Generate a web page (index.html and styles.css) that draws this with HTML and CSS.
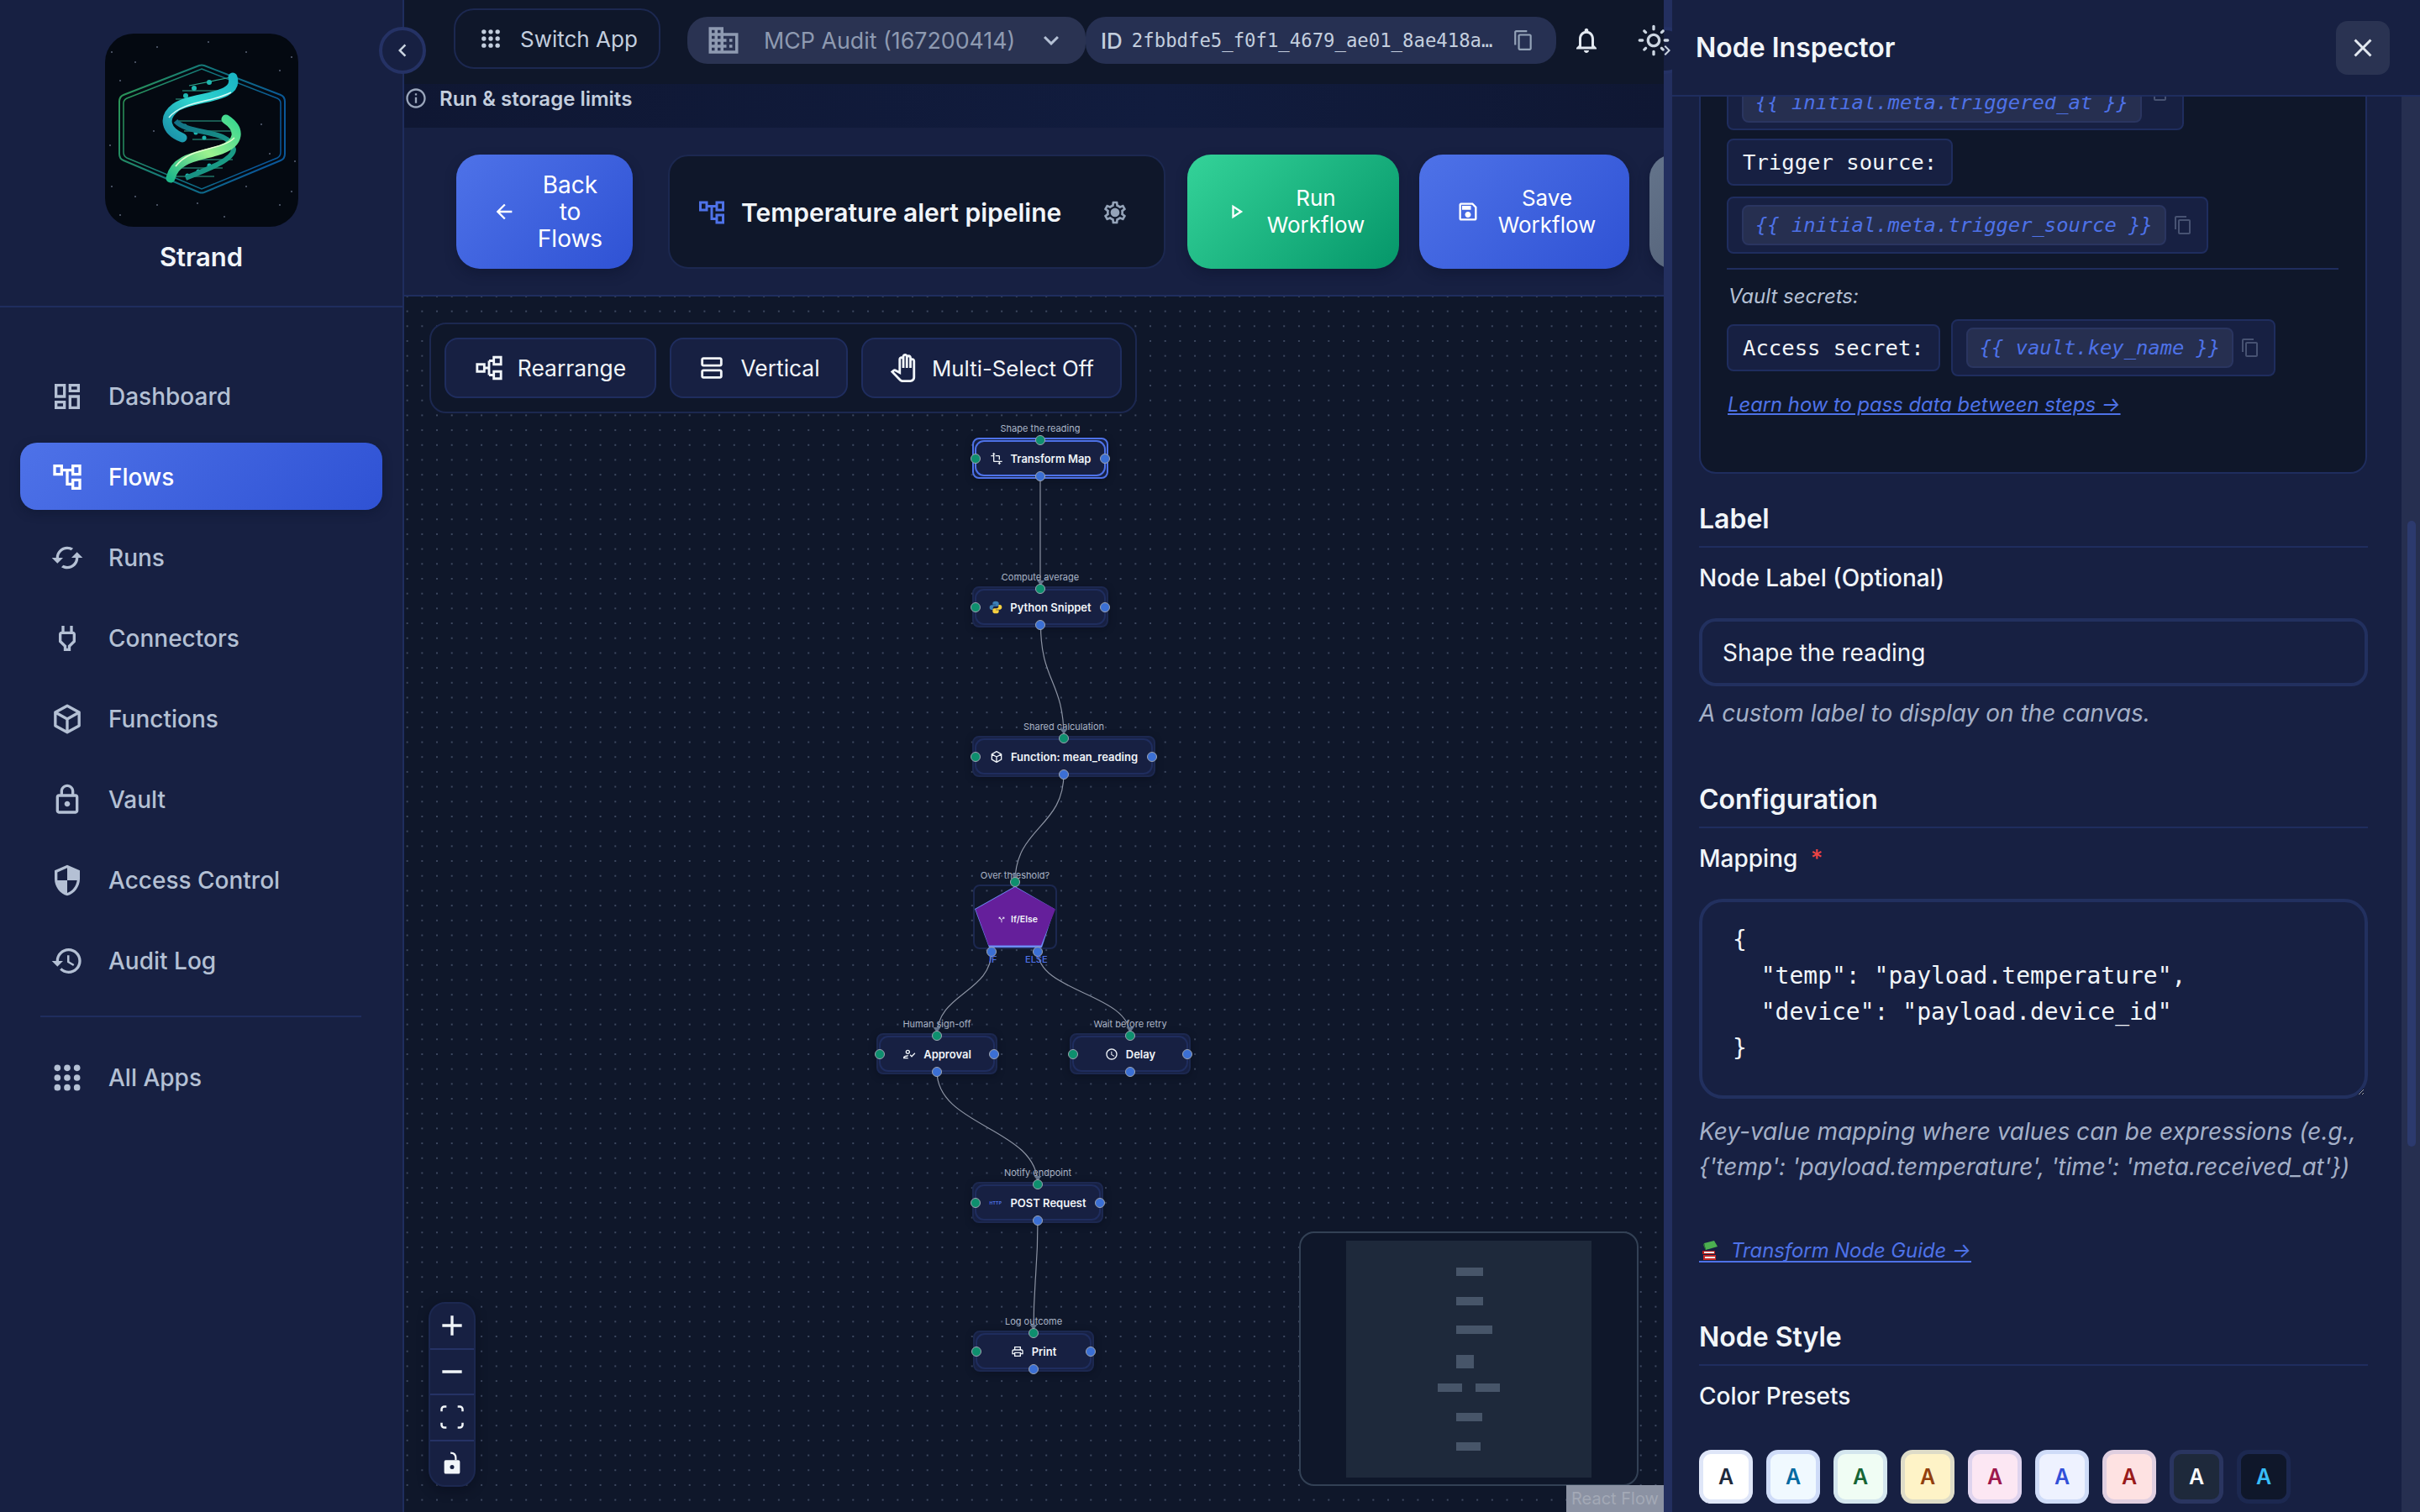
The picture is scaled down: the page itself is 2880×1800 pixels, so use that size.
FILE: index.html
```html
<!DOCTYPE html>
<html lang="en">
<head>
    <meta charset="utf-8">
    <title>Temperature alert pipeline</title>
    <link rel="stylesheet" href="styles.css">
</head>
<body>
    <svg class="sprite" width="0" height="0">
        <symbol id="i-apps" viewBox="0 0 24 24"><circle cx="5" cy="5" r="2.3"/><circle cx="12" cy="5" r="2.3"/><circle cx="19" cy="5" r="2.3"/><circle cx="5" cy="12" r="2.3"/><circle cx="12" cy="12" r="2.3"/><circle cx="19" cy="12" r="2.3"/><circle cx="5" cy="19" r="2.3"/><circle cx="12" cy="19" r="2.3"/><circle cx="19" cy="19" r="2.3"/></symbol>
        <symbol id="i-tree" viewBox="0 0 24 24"><path d="M22 11V3h-7v3H9V3H2v8h7V8h2v10h4v3h7v-8h-7v3h-2V8h2v3zM7 9H4V5h3zm10 6h3v4h-3zm0-10h3v4h-3z"/></symbol>
        <symbol id="i-cube" viewBox="0 0 24 24"><path d="M12 2.500 20.500 7.200v9.600L12 21.500l-8.500-4.700V7.200zM3.500 7.200 12 12l8.500-4.800M12 12v9.500" fill="none" stroke="currentColor" stroke-width="2" stroke-linejoin="round"/></symbol>
        <symbol id="i-copy" viewBox="0 0 24 24"><path d="M16 1H4c-1.100 0-2 .9-2 2v14h2V3h12zm3 4H8c-1.100 0-2 .9-2 2v14c0 1.100.9 2 2 2h11c1.100 0 2-.9 2-2V7c0-1.100-.9-2-2-2m0 16H8V7h11z"/></symbol>
    </svg>

    <div class="app">
        <aside class="sidebar">
            <div class="brand">
                <svg class="logo" viewBox="0 0 230 230">
                    <defs>
                        <linearGradient id="hexStroke" x1="0" y1="0" x2="1" y2="0.3">
                            <stop offset="0" stop-color="#2f9a52"/>
                            <stop offset="0.55" stop-color="#11747f"/>
                            <stop offset="1" stop-color="#0a5798"/>
                        </linearGradient>
                        <linearGradient id="ribbonTop" x1="0" y1="1" x2="1" y2="0">
                            <stop offset="0" stop-color="#1a8fa8"/>
                            <stop offset="0.5" stop-color="#2fd6cf"/>
                            <stop offset="1" stop-color="#1bb6c4"/>
                        </linearGradient>
                        <linearGradient id="ribbonBottom" x1="0" y1="1" x2="1" y2="0">
                            <stop offset="0" stop-color="#1fb98a"/>
                            <stop offset="0.5" stop-color="#9cf28f"/>
                            <stop offset="1" stop-color="#39d68f"/>
                        </linearGradient>
                        <linearGradient id="ribbonBack" x1="0" y1="0" x2="1" y2="1">
                            <stop offset="0" stop-color="#126f86"/>
                            <stop offset="1" stop-color="#1ca884"/>
                        </linearGradient>
                    </defs>
                    <rect width="230" height="230" rx="34" fill="#040911"/>
                    <g fill="#5b6478">
                        <circle cx="8" cy="22" r="1"/><circle cx="36" cy="34" r="1"/><circle cx="62" cy="16" r="1"/><circle cx="123" cy="10" r="1"/><circle cx="168" cy="22" r="1"/><circle cx="222" cy="28" r="1"/><circle cx="208" cy="44" r="1"/><circle cx="18" cy="56" r="1"/><circle cx="6" cy="133" r="1"/><circle cx="58" cy="116" r="1"/><circle cx="186" cy="108" r="1"/><circle cx="196" cy="143" r="1"/><circle cx="8" cy="182" r="1"/><circle cx="36" cy="194" r="1"/><circle cx="62" cy="204" r="1"/><circle cx="110" cy="202" r="1"/><circle cx="168" cy="182" r="1"/><circle cx="222" cy="188" r="1"/><circle cx="208" cy="204" r="1"/><circle cx="142" cy="218" r="1"/><circle cx="18" cy="216" r="1"/><circle cx="226" cy="152" r="1"/>
                    </g>
                    <path d="M112 38q3-1 6 0l91 35q5 2 5 8v62q0 6-5 8l-91 38q-3 1-6 0l-90-38q-5-2-5-8V81q0-6 5-8z" fill="none" stroke="url(#hexStroke)" stroke-width="2"/>
                    <path d="M115 42 205 77q4 2 4 6v58q0 5-4 7L115 185 26 148q-4-2-4-7V83q0-4 4-6z" fill="none" stroke="url(#hexStroke)" stroke-width="1.500"/>
                    <g stroke="#2ea98f" stroke-width="1.200">
                        <path d="M100 62l50-10M92 68h52M84 78h40M88 104h60M94 116h56M104 126h48M96 150h56M88 160h52M84 170h46"/>
                    </g>
                    <g fill="#1eb7b0">
                        <circle cx="124" cy="58" r="3"/><circle cx="106" cy="65" r="3"/><circle cx="96" cy="74" r="3"/><circle cx="95" cy="110" r="2.500"/><circle cx="108" cy="118" r="2.500"/><circle cx="118" cy="124" r="2.500"/><circle cx="124" cy="157" r="2.500"/><circle cx="111" cy="164" r="2.500"/><circle cx="98" cy="169" r="2.500"/>
                    </g>
                    <path d="M84 104C100 122 148 112 153 138 152 150 126 160 96 172" fill="none" stroke="url(#ribbonBack)" stroke-width="6"/>
                    <path d="M152 52C160 78 104 74 84 88 68 100 72 116 92 124" fill="none" stroke="url(#ribbonTop)" stroke-width="11" stroke-linecap="round"/>
                    <path d="M144 102C162 114 160 130 138 138 116 146 84 146 78 172" fill="none" stroke="url(#ribbonBottom)" stroke-width="11" stroke-linecap="round"/>
                    <path d="M150 70C128 82 92 80 76 100" fill="none" stroke="#d6fbf5" stroke-width="1.500"/>
                    <path d="M154 124C138 140 102 134 84 158" fill="none" stroke="#e5ffd0" stroke-width="1.500"/>
                </svg>
                <div class="brand-name">Strand</div>
            </div>
            <nav class="nav">
                <a class="nav-item"><svg class="nav-icon" viewBox="0 0 24 24"><path d="M19 5v2h-4V5zM9 5v6H5V5zm10 8v6h-4v-6zM9 17v2H5v-2zM21 3h-8v6h8zM11 3H3v10h8zm10 8h-8v10h8zm-10 4H3v6h8z"/></svg>Dashboard</a>
                <a class="nav-item active"><svg class="nav-icon" viewBox="0 0 24 24"><use href="#i-tree"/></svg>Flows</a>
                <a class="nav-item"><svg class="nav-icon" viewBox="0 0 24 24"><path d="m19 8-4 4h3c0 3.310-2.690 6-6 6-1.010 0-1.970-.25-2.800-.7l-1.460 1.460C8.970 19.540 10.430 20 12 20c4.420 0 8-3.580 8-8h3zM6 12c0-3.310 2.690-6 6-6 1.010 0 1.970.25 2.800.7l1.460-1.460C15.030 4.460 13.570 4 12 4c-4.420 0-8 3.580-8 8H1l4 4 4-4z"/></svg>Runs</a>
                <a class="nav-item"><svg class="nav-icon" viewBox="0 0 24 24"><path d="M16 9v4.660l-3.500 3.510V19h-1v-1.830L8 13.650V9zm0-6h-2v4h-4V3H8v4h-.01C6.900 6.990 6 7.890 6 8.980V14.500L9.500 18v3h5v-3l3.500-3.510V9c0-1.100-.9-2-2-2z"/></svg>Connectors</a>
                <a class="nav-item"><svg class="nav-icon" viewBox="0 0 24 24"><use href="#i-cube"/></svg>Functions</a>
                <a class="nav-item"><svg class="nav-icon" viewBox="0 0 24 24"><path d="M18 8h-1V6c0-2.760-2.240-5-5-5S7 3.240 7 6v2H6c-1.100 0-2 .9-2 2v10c0 1.100.9 2 2 2h12c1.100 0 2-.9 2-2V10c0-1.100-.9-2-2-2M9 6c0-1.660 1.340-3 3-3s3 1.340 3 3v2H9zm9 14H6V10h12zm-6-3c1.100 0 2-.9 2-2s-.9-2-2-2-2 .9-2 2 .9 2 2 2"/></svg>Vault</a>
                <a class="nav-item"><svg class="nav-icon" viewBox="0 0 24 24"><path d="M12 1 3 5v6c0 5.550 3.840 10.740 9 12 5.160-1.260 9-6.450 9-12V5zm0 10.990h7c-.53 4.120-3.280 7.790-7 8.940V12H5V6.300l7-3.110z"/></svg>Access Control</a>
                <a class="nav-item"><svg class="nav-icon" viewBox="0 0 24 24"><path d="M13 3c-4.970 0-9 4.030-9 9H1l3.890 3.890.07.14L9 12H6c0-3.870 3.130-7 7-7s7 3.130 7 7-3.130 7-7 7c-1.930 0-3.680-.79-4.940-2.060l-1.420 1.420C8.270 19.990 10.510 21 13 21c4.970 0 9-4.030 9-9s-4.030-9-9-9m-1 5v5l4.280 2.540.72-1.210-3.500-2.080V8z"/></svg>Audit Log</a>
                <div class="nav-divider"></div>
                <a class="nav-item"><svg class="nav-icon" viewBox="0 0 24 24"><use href="#i-apps"/></svg>All Apps</a>
            </nav>
            <button class="collapse-btn"><svg viewBox="0 0 24 24"><path d="M15.410 7.410 14 6l-6 6 6 6 1.410-1.410L10.830 12z"/></svg></button>
        </aside>

        <main class="main">
            <header class="topbar">
                <button class="switch-app"><svg viewBox="0 0 24 24"><use href="#i-apps"/></svg>Switch App</button>
                <div class="org-select">
                    <svg class="org-icon" viewBox="0 0 24 24"><path d="M12 7V3H2v18h20V7zM6 19H4v-2h2zm0-4H4v-2h2zm0-4H4V9h2zm0-4H4V5h2zm4 12H8v-2h2zm0-4H8v-2h2zm0-4H8V9h2zm0-4H8V5h2zm10 12h-8v-2h2v-2h-2v-2h2v-2h-2V9h8zm-2-8h-2v2h2zm0 4h-2v2h2z"/></svg>
                    <span class="org-name">MCP Audit (167200414)</span>
                    <svg class="org-chevron" viewBox="0 0 24 24"><path d="M7.410 8.590 12 13.170l4.590-4.580L18 10l-6 6-6-6z"/></svg>
                </div>
                <div class="id-chip">
                    <span class="id-key">ID</span>
                    <span class="id-value">2fbbdfe5_f0f1_4679_ae01_8ae418a…</span>
                    <svg viewBox="0 0 24 24"><use href="#i-copy"/></svg>
                </div>
                <svg class="top-icon bell" viewBox="0 0 24 24"><path d="M12 22c1.100 0 2-.9 2-2h-4c0 1.100.9 2 2 2m6-6v-5c0-3.070-1.630-5.640-4.500-6.320V4c0-.83-.67-1.500-1.500-1.500s-1.500.67-1.500 1.500v.68C7.640 5.360 6 7.920 6 11v5l-2 2v1h16v-1zm-2 1H8v-6c0-2.480 1.510-4.500 4-4.500s4 2.020 4 4.500z"/></svg>
                <svg class="top-icon sun" viewBox="0 0 24 24"><path d="M12 9c1.650 0 3 1.350 3 3s-1.350 3-3 3-3-1.350-3-3 1.350-3 3-3m0-2c-2.760 0-5 2.240-5 5s2.240 5 5 5 5-2.240 5-5-2.240-5-5-5M2 13h2c.55 0 1-.45 1-1s-.45-1-1-1H2c-.55 0-1 .45-1 1s.45 1 1 1m18 0h2c.55 0 1-.45 1-1s-.45-1-1-1h-2c-.55 0-1 .45-1 1s.45 1 1 1M11 2v2c0 .55.45 1 1 1s1-.45 1-1V2c0-.55-.45-1-1-1s-1 .45-1 1m0 18v2c0 .55.45 1 1 1s1-.45 1-1v-2c0-.55-.45-1-1-1s-1 .45-1 1M5.990 4.580c-.39-.39-1.030-.39-1.410 0-.39.39-.39 1.030 0 1.410l1.060 1.060c.39.39 1.030.39 1.410 0s.39-1.030 0-1.410zm12.370 12.370c-.39-.39-1.030-.39-1.410 0-.39.39-.39 1.030 0 1.410l1.060 1.060c.39.39 1.030.39 1.410 0 .39-.39.39-1.030 0-1.410zm1.060-10.960c.39-.39.39-1.030 0-1.410-.39-.39-1.030-.39-1.410 0l-1.060 1.060c-.39.39-.39 1.030 0 1.410s1.030.39 1.410 0zM7.050 18.360c.39-.39.39-1.030 0-1.410-.39-.39-1.030-.39-1.410 0l-1.060 1.060c-.39.39-.39 1.030 0 1.410s1.030.39 1.410 0z"/></svg>
            </header>

            <div class="limits-bar">
                <svg viewBox="0 0 24 24"><path d="M11 7h2v2h-2zm0 4h2v6h-2zm1-9C6.480 2 2 6.480 2 12s4.480 10 10 10 10-4.480 10-10S17.520 2 12 2m0 18c-4.410 0-8-3.590-8-8s3.590-8 8-8 8 3.590 8 8-3.590 8-8 8"/></svg>
                Run &amp; storage limits
            </div>

            <div class="toolbar">
                <button class="action action-blue action-back">
                    <svg viewBox="0 0 24 24"><path d="M20 11H7.830l5.590-5.590L12 4l-8 8 8 8 1.410-1.410L7.830 13H20z"/></svg>
                    <span>Back<br>to<br>Flows</span>
                </button>
                <div class="flow-title">
                    <svg class="flow-title-icon" viewBox="0 0 24 24"><use href="#i-tree"/></svg>
                    <span class="flow-title-text">Temperature alert pipeline</span>
                    <svg class="flow-title-gear" viewBox="0 0 24 24"><path d="M19.430 12.980c.04-.32.07-.64.07-.98 0-.34-.03-.66-.07-.98l2.110-1.650c.19-.15.24-.42.12-.64l-2-3.460c-.09-.16-.26-.25-.44-.25-.06 0-.12.01-.17.03l-2.490 1c-.52-.4-1.080-.73-1.690-.98l-.38-2.650C14.460 2.180 14.250 2 14 2h-4c-.25 0-.46.18-.49.42l-.38 2.650c-.61.25-1.170.59-1.690.98l-2.490-1c-.06-.02-.12-.03-.18-.03-.17 0-.34.09-.43.25l-2 3.460c-.13.22-.07.49.12.64l2.110 1.650c-.04.32-.07.65-.07.98 0 .33.03.66.07.98l-2.110 1.650c-.19.15-.24.42-.12.64l2 3.460c.09.16.26.25.44.25.06 0 .12-.01.17-.03l2.490-1c.52.4 1.080.73 1.690.98l.38 2.650c.03.24.24.42.49.42h4c.25 0 .46-.18.49-.42l.38-2.650c.61-.25 1.170-.59 1.690-.98l2.490 1c.06.02.12.03.18.03.17 0 .34-.09.43-.25l2-3.460c.12-.22.07-.49-.12-.64zM17.450 11.280c.04.31.05.52.05.72s-.02.42-.05.72l-.14 1.130.89.7 1.080.84-.7 1.210-1.270-.51-1.040-.42-.9.68c-.43.32-.84.56-1.250.73l-1.060.43-.16 1.130-.2 1.350h-1.400l-.19-1.350-.16-1.130-1.060-.43c-.43-.18-.83-.41-1.230-.71l-.91-.7-1.060.43-1.270.51-.7-1.210 1.080-.84.89-.7-.14-1.130c-.03-.31-.05-.54-.05-.73s.02-.42.05-.72l.14-1.130-.89-.7-1.080-.84.7-1.210 1.270.51 1.040.42.9-.68c.43-.32.84-.56 1.250-.73l1.060-.43.16-1.130.2-1.350h1.390l.19 1.350.16 1.130 1.060.43c.43.18.83.41 1.230.71l.91.7 1.060-.43 1.270-.51.7 1.210-1.070.85-.89.7zM12 8c-2.210 0-4 1.790-4 4s1.790 4 4 4 4-1.790 4-4-1.790-4-4-4"/></svg>
                </div>
                <button class="action action-green action-run">
                    <svg viewBox="0 0 24 24"><path d="M10 8.640 15.270 12 10 15.360zM8 5v14l11-7z"/></svg>
                    <span>Run<br>Workflow</span>
                </button>
                <button class="action action-blue action-save">
                    <svg viewBox="0 0 24 24"><path d="M17 3H5c-1.110 0-2 .9-2 2v14c0 1.100.89 2 2 2h14c1.100 0 2-.9 2-2V7zm2 16H5V5h11.170L19 7.830zm-7-7c-1.660 0-3 1.340-3 3s1.340 3 3 3 3-1.340 3-3-1.340-3-3-3M6 6h9v4H6z"/></svg>
                    <span>Save<br>Workflow</span>
                </button>
                <button class="action action-gray"></button>
            </div>

            <section class="canvas">
                <div class="layout-bar">
                    <button class="layout-btn btn-rearrange"><svg viewBox="0 0 24 24" class="stroke-icon"><path d="M2 9h6v6H2zM16 3h6v6h-6zM16 15h6v6h-6zM8 12h4M12 6v12M12 6h4M12 18h4"/></svg>Rearrange</button>
                    <button class="layout-btn btn-vertical"><svg viewBox="0 0 24 24"><path d="M19 13H5c-1.100 0-2 .9-2 2v4c0 1.100.9 2 2 2h14c1.100 0 2-.9 2-2v-4c0-1.100-.9-2-2-2m0 6H5v-4h14zm0-16H5c-1.100 0-2 .9-2 2v4c0 1.100.9 2 2 2h14c1.100 0 2-.9 2-2V5c0-1.100-.9-2-2-2m0 6H5V5h14z"/></svg>Vertical</button>
                    <button class="layout-btn btn-multi"><svg viewBox="0 0 24 24"><path d="M18 24h-6.550c-1.080 0-2.140-.45-2.890-1.230l-7.300-7.610 2.070-1.830c.62-.55 1.530-.66 2.260-.27L8 14.340V4.790c0-1.380 1.120-2.500 2.500-2.500.17 0 .34.02.51.05.09-1.300 1.170-2.330 2.490-2.330.86 0 1.610.43 2.060 1.090.29-.12.61-.18.94-.18 1.380 0 2.500 1.120 2.500 2.500v.28c.16-.03.33-.05.5-.05 1.380 0 2.500 1.120 2.500 2.500V20c0 2.210-1.790 4-4 4M4.140 15.280l5.860 6.100c.38.39.9.62 1.440.62H18c1.100 0 2-.9 2-2V6.150c0-.28-.22-.5-.5-.5s-.5.22-.5.5V12h-2V3.420c0-.28-.22-.5-.5-.5s-.5.22-.5.5V12h-2V2.510c0-.28-.22-.5-.5-.5s-.5.22-.5.5V12h-2V4.790c0-.28-.22-.5-.5-.5s-.5.23-.5.5v12.870l-5.350-2.830z"/></svg>Multi-Select Off</button>
                </div>

                <svg class="edges" viewBox="481 353 1499 1447">
                    <g class="edge-lines">
                        <path d="M1238 567V701"/>
                        <path d="M1238.500 744C1238.500 811 1266 811 1266 878"/>
                        <path d="M1266 921C1266 985 1208 985 1208 1050"/>
                        <path d="M1180 1132C1180 1182 1115 1182 1115 1233"/>
                        <path d="M1235 1132C1235 1182 1345 1182 1345 1233"/>
                        <path d="M1115 1275C1115 1342 1235 1342 1235 1410"/>
                        <path d="M1235 1452C1235 1519 1230 1519 1230 1587"/>
                    </g>
                    <g class="edge-arrows">
                        <path d="M1234 691h9l-4.500 6z"/>
                        <path d="M1261.500 868h9l-4.500 6z"/>
                        <path d="M1203.500 1040h9l-4.500 6z"/>
                        <path d="M1110.500 1223h9l-4.500 6z"/>
                        <path d="M1340.500 1223h9l-4.500 6z"/>
                        <path d="M1230.500 1400h9l-4.500 6z"/>
                        <path d="M1225.500 1577h9l-4.500 6z"/>
                    </g>
                </svg>

                <div class="node node-transform selected">
                    <span class="node-label">Shape the reading</span>
                    <svg class="node-icon" viewBox="0 0 24 24"><path d="M22 18v-2H8V4h2L7 1 4 4h2v2H2v2h4v8c0 1.100.9 2 2 2h8v2h-2l3 3 3-3h-2v-2zM10 8h6v6h2V8c0-1.100-.9-2-2-2h-6z"/></svg>
                    Transform Map
                    <i class="handle h-top"></i><i class="handle h-left"></i><i class="handle h-right"></i><i class="handle h-bottom"></i>
                </div>
                <div class="node node-python">
                    <span class="node-label">Compute average</span>
                    <svg class="node-icon" viewBox="0 0 24 24"><path fill="#3b7fb8" d="M12 1C8 1 6.500 2.500 6.500 4.500V7H12v1H4.500C2.500 8 1 9.800 1 12.300s1.500 4.200 3.500 4.200H7v-3c0-2 1.500-3.300 3.300-3.300h4.400c1.600 0 2.800-1.200 2.800-2.800V4.500C17.500 2.500 15.500 1 12 1z"/><path fill="#f6d03f" d="M12 23c4 0 5.500-1.500 5.500-3.500V17H12v-1h7.500c2 0 3.500-1.800 3.500-4.300s-1.500-4.200-3.500-4.200H17v3c0 2-1.500 3.300-3.300 3.300H9.300c-1.600 0-2.800 1.200-2.800 2.800v2.900C6.500 21.500 8.500 23 12 23z"/></svg>
                    Python Snippet
                    <i class="handle h-top"></i><i class="handle h-left"></i><i class="handle h-right"></i><i class="handle h-bottom"></i>
                </div>
                <div class="node node-function">
                    <span class="node-label">Shared calculation</span>
                    <svg class="node-icon" viewBox="0 0 24 24"><use href="#i-cube"/></svg>
                    Function: mean_reading
                    <i class="handle h-top"></i><i class="handle h-left"></i><i class="handle h-right"></i><i class="handle h-bottom"></i>
                </div>
                <div class="node-if">
                    <span class="node-label">Over threshold?</span>
                    <svg class="pentagon" viewBox="0 0 100 77">
                        <path class="pentagon-edge" d="M50 2 97 29 82 75H19L2 29z"/>
                        <path class="pentagon-fill" d="M50 3 98 29.500 81 72.500H18.500L3 29.500z"/>
                    </svg>
                    <span class="if-title"><svg viewBox="0 0 24 24"><path d="m14 4 2.290 2.290-2.880 2.880 1.420 1.420 2.880-2.880L20 10V4zm-4 0H4v6l2.290-2.290 4.710 4.700V20h2v-8.410l-5.290-5.300z"/></svg>If/Else</span>
                    <i class="handle h-top"></i><i class="handle h-if"></i><i class="handle h-else"></i>
                    <span class="branch branch-if">IF</span><span class="branch branch-else">ELSE</span>
                </div>
                <div class="node node-approval">
                    <span class="node-label">Human sign-off</span>
                    <svg class="node-icon" viewBox="0 0 24 24"><path d="M9.500 12a4 4 0 1 0 0-8 4 4 0 0 0 0 8zm0-6a2 2 0 1 1 0 4 2 2 0 0 1 0-4zM3.500 18c.2-.7 3.300-2 6-2 .4-.7.8-1.300 1.300-1.900-.5-.1-.9-.1-1.300-.1-2.700 0-8 1.300-8 4v2h9.500l-1.900-2zM21.600 9.500 16.500 14.600 14.400 12.500 13 13.900 16.500 17.500 23 10.900z"/></svg>
                    Approval
                    <i class="handle h-top"></i><i class="handle h-left"></i><i class="handle h-right"></i><i class="handle h-bottom"></i>
                </div>
                <div class="node node-delay">
                    <span class="node-label">Wait before retry</span>
                    <svg class="node-icon" viewBox="0 0 24 24"><path d="M11.990 2C6.470 2 2 6.480 2 12s4.470 10 9.990 10C17.520 22 22 17.520 22 12S17.520 2 11.990 2M12 20c-4.420 0-8-3.580-8-8s3.580-8 8-8 8 3.580 8 8-3.580 8-8 8m.5-13H11v6l5.250 3.150.75-1.230-4.500-2.670z"/></svg>
                    Delay
                    <i class="handle h-top"></i><i class="handle h-left"></i><i class="handle h-right"></i><i class="handle h-bottom"></i>
                </div>
                <div class="node node-post">
                    <span class="node-label">Notify endpoint</span>
                    <span class="http-tag">HTTP</span>
                    POST Request
                    <i class="handle h-top"></i><i class="handle h-left"></i><i class="handle h-right"></i><i class="handle h-bottom"></i>
                </div>
                <div class="node node-print">
                    <span class="node-label">Log outcome</span>
                    <svg class="node-icon" viewBox="0 0 24 24"><path d="M19 8h-1V3H6v5H5c-1.660 0-3 1.340-3 3v6h4v4h12v-4h4v-6c0-1.660-1.340-3-3-3M8 5h8v3H8zm8 12v2H8v-4h8zm2-2v-2H6v2H4v-4c0-.55.45-1 1-1h14c.55 0 1 .45 1 1v4z"/></svg>
                    Print
                    <i class="handle h-top"></i><i class="handle h-left"></i><i class="handle h-right"></i><i class="handle h-bottom"></i>
                </div>

                <div class="zoom-controls">
                    <button class="zoom-btn"><svg viewBox="0 0 24 24"><path d="M19 13h-6v6h-2v-6H5v-2h6V5h2v6h6z"/></svg></button>
                    <button class="zoom-btn"><svg viewBox="0 0 24 24"><path d="M19 13H5v-2h14z"/></svg></button>
                    <button class="zoom-btn"><svg viewBox="0 0 24 24"><path d="M8 4.500H6.500a2 2 0 0 0-2 2V8M16 4.500h1.500a2 2 0 0 1 2 2V8M8 19.500H6.500a2 2 0 0 1-2-2V16M16 19.500h1.500a2 2 0 0 0 2-2V16" fill="none" stroke="currentColor" stroke-width="1.500"/></svg></button>
                    <button class="zoom-btn zoom-lock"><svg viewBox="0 0 24 24"><path d="M6 9h12a1.500 1.500 0 0 1 1.500 1.500v10A1.500 1.500 0 0 1 18 22H6a1.500 1.500 0 0 1-1.500-1.500v-10A1.500 1.500 0 0 1 6 9zm6 4.500a2 2 0 1 0 0 4 2 2 0 0 0 0-4z" fill-rule="evenodd"/><path d="M10.500 2c3 0 5 1.500 5 5v2" fill="none" stroke="currentColor" stroke-width="1.800"/></svg></button>
                </div>

                <svg class="minimap" viewBox="1548 1468 400 299">
                    <rect class="minimap-mask" x="1602" y="1477" width="292" height="282"/>
                    <g class="minimap-nodes">
                        <rect x="1733" y="1509" width="32" height="10"/>
                        <rect x="1733" y="1544" width="32" height="10"/>
                        <rect x="1733" y="1578" width="43" height="10"/>
                        <rect x="1733" y="1613" width="21" height="16"/>
                        <rect x="1711" y="1647" width="29" height="10"/>
                        <rect x="1756" y="1647" width="29" height="10"/>
                        <rect x="1733" y="1682" width="31" height="10"/>
                        <rect x="1733" y="1717" width="29" height="10"/>
                    </g>
                </svg>
                <a class="attribution">React Flow</a>
            </section>
        </main>

        <aside class="inspector">
            <button class="inspector-toggle"><svg viewBox="0 0 24 24"><path d="M8.590 16.590 10 18l6-6-6-6-1.410 1.410L13.170 12z"/></svg></button>
            <header class="inspector-head">
                <h2>Node Inspector</h2>
                <button class="close-btn"><svg viewBox="0 0 24 24"><path d="M19 6.410 17.590 5 12 10.590 6.410 5 5 6.410 10.590 12 5 17.590 6.410 19 12 13.410 17.590 19 19 17.590 13.410 12z"/></svg></button>
            </header>
            <div class="inspector-body">
                <div class="inspector-scroll">
                    <div class="data-card">
                        <div class="expr-chip first">
                            <code>{{ initial.meta.triggered_at }}</code>
                            <svg viewBox="0 0 24 24"><use href="#i-copy"/></svg>
                        </div>
                        <div class="key-chip">Trigger source:</div>
                        <div class="expr-chip second">
                            <code>{{ initial.meta.trigger_source }}</code>
                            <svg viewBox="0 0 24 24"><use href="#i-copy"/></svg>
                        </div>
                        <div class="card-divider"></div>
                        <div class="card-note">Vault secrets:</div>
                        <div class="chip-row">
                            <div class="key-chip">Access secret:</div>
                            <div class="expr-chip">
                                <code>{{ vault.key_name }}</code>
                                <svg viewBox="0 0 24 24"><use href="#i-copy"/></svg>
                            </div>
                        </div>
                        <a class="doc-link card-link">Learn how to pass data between steps →</a>
                    </div>

                    <h3 class="section-title section-label">Label</h3>
                    <div class="field-label">Node Label (Optional)</div>
                    <input class="text-input" type="text" value="Shape the reading">
                    <p class="help">A custom label to display on the canvas.</p>

                    <h3 class="section-title section-config">Configuration</h3>
                    <div class="field-label">Mapping <span class="required">*</span></div>
                    <textarea class="code-input" spellcheck="false">{
  "temp": "payload.temperature",
  "device": "payload.device_id"
}</textarea>
                    <p class="help">Key-value mapping where values can be expressions (e.g., {'temp': 'payload.temperature', 'time': 'meta.received_at'})</p>
                    <a class="doc-link guide-link"><svg viewBox="0 0 24 24"><path fill="#b71c1c" d="M4 12h15v4H4z"/><path fill="#e8e8e8" d="M6 13h12v2H6z"/><path fill="#c62828" d="M5 17h15v6H5z"/><path fill="#e8e8e8" d="M7 19h12v2H7z"/><path fill="#4caf50" d="M6 3 18 0l4 7-14 4z"/><path fill="#2e7d32" d="M6 3l2 8v1L5 5z"/></svg><span>Transform Node Guide →</span></a>

                    <h3 class="section-title section-style">Node Style</h3>
                    <div class="field-label">Color Presets</div>
                    <div class="swatches">
                        <button class="swatch sw-white">A</button>
                        <button class="swatch sw-sky">A</button>
                        <button class="swatch sw-mint">A</button>
                        <button class="swatch sw-amber">A</button>
                        <button class="swatch sw-pink">A</button>
                        <button class="swatch sw-indigo">A</button>
                        <button class="swatch sw-red">A</button>
                        <button class="swatch sw-slate">A</button>
                        <button class="swatch sw-navy">A</button>
                    </div>
                </div>
                <div class="scroll-track"><div class="scroll-thumb"></div></div>
            </div>
        </aside>
    </div>
</body>
</html>
```
FILE: styles.css
```css
* {
    box-sizing: border-box;
}
html, body {
    margin: 0;
    height: 100%;
    overflow: hidden;
}
body {
    font-family: Inter, "Liberation Sans", sans-serif;
    background: #0f172a;
    color: #f1f5f9;
}
button {
    font-family: inherit;
    border: none;
    padding: 0;
    cursor: pointer;
}
svg {
    fill: currentColor;
    flex: none;
}
.sprite {
    position: absolute;
}
.app {
    display: flex;
    width: 2880px;
    height: 1800px;
}

/* sidebar */
.sidebar {
    position: relative;
    width: 481px;
    flex: none;
    background: #172042;
    border-right: 2px solid #1f2d5e;
    z-index: 4;
}
.brand {
    display: flex;
    flex-direction: column;
    align-items: center;
    height: 366px;
    padding-top: 40px;
    border-bottom: 2px solid #1f2d5e;
}
.logo {
    width: 230px;
    height: 230px;
}
.brand-name {
    margin-top: 16px;
    font-size: 31px;
    line-height: 40px;
    font-weight: 600;
}
.nav {
    display: flex;
    flex-direction: column;
    gap: 16px;
    padding: 65px 24px 0;
}
.nav-item {
    display: flex;
    align-items: center;
    gap: 29px;
    width: 431px;
    height: 80px;
    padding: 2px 0 0 36px;
    border-radius: 20px;
    font-size: 28px;
    font-weight: 500;
    color: #b4c0d4;
}
.nav-item.active {
    color: #fff;
    background: linear-gradient(135deg, #4e72e8, #2f52d4);
    box-shadow: 0 4px 12px rgba(10, 16, 40, .35);
}
.nav-icon {
    width: 40px;
    height: 40px;
}
.nav-divider {
    width: 382px;
    height: 2px;
    margin: 10px 24px 15px;
    background: #1f2d5e;
}
.collapse-btn {
    position: absolute;
    top: 32px;
    right: -28px;
    width: 56px;
    height: 56px;
    display: flex;
    align-items: center;
    justify-content: center;
    border-radius: 50%;
    background: #172042;
    border: 4px solid #253265;
    color: #cbd5e1;
}
.collapse-btn svg {
    width: 30px;
    height: 30px;
}

/* main column */
.main {
    display: flex;
    flex-direction: column;
    width: 1499px;
    flex: none;
}
.topbar {
    position: relative;
    z-index: 3;
    display: flex;
    align-items: center;
    height: 100px;
    padding: 0 0 4px 59px;
    background: #0f172a;
}
.switch-app {
    display: flex;
    align-items: center;
    flex: none;
    gap: 21px;
    width: 246px;
    height: 72px;
    margin-top: -4px;
    padding-left: 28px;
    border: 2px solid #1c2850;
    border-radius: 24px;
    background: transparent;
    color: #c3cede;
    font-size: 26px;
}
.switch-app svg {
    width: 28px;
    height: 28px;
}
.org-select {
    display: flex;
    align-items: center;
    flex: none;
    width: 474px;
    height: 56px;
    margin-left: 32px;
    padding-left: 22px;
    border-radius: 24px;
    background: #2a3352;
    color: #8e9ab1;
    font-size: 26.8px;
}
.org-icon {
    width: 42px;
    height: 42px;
}
.org-name {
    margin-left: 27px;
    white-space: nowrap;
}
.org-chevron {
    width: 36px;
    height: 36px;
    margin-left: 25px;
    color: #b4c0d4;
}
.id-chip {
    display: flex;
    align-items: center;
    flex: none;
    width: 560px;
    height: 56px;
    padding-left: 18px;
    border-radius: 24px;
    background: #263052;
    color: #c3cede;
}
.id-key {
    font-size: 26px;
    font-weight: 500;
}
.id-value {
    margin-left: 11px;
    font-family: "DejaVu Sans Mono", monospace;
    font-size: 22.3px;
    white-space: nowrap;
}
.id-chip svg {
    width: 26px;
    height: 26px;
    margin-left: 24px;
    color: #94a3b8;
}
.top-icon {
    width: 36px;
    height: 36px;
    color: #e2e8f0;
}
.bell {
    margin-left: 18px;
}
.sun {
    width: 40px;
    height: 40px;
    margin-left: 42px;
    color: #cbd5e1;
}
.limits-bar {
    display: flex;
    align-items: center;
    gap: 14px;
    height: 52px;
    padding: 0 0 18px 0;
    background: linear-gradient(90deg, #0f1733, #111c3e 60%, #0f1733);
    color: #c3cede;
    font-size: 24px;
    font-weight: 600;
}
.limits-bar svg {
    width: 28px;
    height: 28px;
    color: #9aa6bb;
}
.toolbar {
    display: flex;
    align-items: center;
    flex: none;
    width: 1499px;
    height: 201px;
    padding-left: 62px;
    overflow: hidden;
    background: #172042;
    border-bottom: 2px solid #1f2d5e;
}
.action {
    display: flex;
    align-items: center;
    flex: none;
    height: 136px;
    border-radius: 28px;
    color: #fff;
    font-size: 28px;
    line-height: 32px;
    text-align: center;
    box-shadow: 0 6px 14px rgba(8, 14, 36, .35);
}
.action svg {
    width: 28px;
    height: 28px;
}
.action span {
    flex: 1;
}
.action-blue {
    background: linear-gradient(135deg, #4e72e8, #2f52d4);
}
.action-green {
    background: linear-gradient(135deg, #34d399, #059669);
}
.action-gray {
    width: 60px;
    margin-left: 24px;
    background: linear-gradient(135deg, #64748b, #55637a);
}
.action-back {
    width: 210px;
    padding: 0 10px 0 43px;
}
.action-run {
    width: 252px;
    margin-left: 26px;
    padding: 0 18px 0 44px;
    font-size: 26px;
}
.action-save {
    width: 250px;
    margin-left: 24px;
    padding: 0 18px 0 44px;
    font-size: 26px;
}
.flow-title {
    display: flex;
    align-items: center;
    flex: none;
    width: 592px;
    height: 136px;
    margin-left: 42px;
    padding: 2px 0 0 32px;
    border: 2px solid #1c2850;
    border-radius: 24px;
    background: #0f172a;
}
.flow-title-icon {
    width: 36px;
    height: 36px;
    color: #4e72e8;
}
.flow-title-text {
    margin-left: 17px;
    font-size: 30px;
    font-weight: 600;
    white-space: nowrap;
}
.flow-title-gear {
    width: 32px;
    height: 32px;
    margin-left: auto;
    margin-right: 42px;
    color: #94a3b8;
}

/* canvas */
.canvas {
    position: relative;
    flex: 1;
    overflow: hidden;
    background-color: #0f172a;
    background-image: radial-gradient(circle, #3d4860 0.8px, transparent 1.1px);
    background-size: 17.7px 17.7px;
    background-position: -5.2px 8.75px;
}
.layout-bar {
    position: absolute;
    left: 30px;
    top: 31px;
    display: flex;
    gap: 16px;
    padding: 16px;
    border: 2px solid #1c2850;
    border-radius: 20px;
    background: #0f172a;
}
.layout-btn {
    display: flex;
    align-items: center;
    justify-content: center;
    gap: 17px;
    height: 72px;
    border: 2px solid #1f2d5e;
    border-radius: 16px;
    background: #172042;
    color: #f1f5f9;
    font-size: 26.4px;
    white-space: nowrap;
}
.layout-btn svg {
    width: 34px;
    height: 34px;
}
.btn-rearrange { width: 252px; }
.btn-vertical { width: 212px; }
.btn-multi { width: 310px; font-size: 25.8px; }
.stroke-icon {
    fill: none;
    stroke: currentColor;
    stroke-width: 2;
}
.edges {
    position: absolute;
    left: 0;
    top: 0;
    width: 1499px;
    height: 1447px;
    z-index: 2;
    pointer-events: none;
}
.edge-lines path {
    fill: none;
    stroke: #8c93a3;
    stroke-width: 1.200;
}
.edge-arrows path {
    fill: #64748b;
}

/* nodes */
.node,
.node-if {
    position: absolute;
    height: 49px;
}
.node {
    display: flex;
    align-items: center;
    justify-content: center;
    gap: 9px;
    border: 2px solid #1c2850;
    border-radius: 8px;
    background: #172042;
    font-size: 13px;
    font-weight: 600;
    color: #f1f5f9;
    white-space: nowrap;
    box-shadow: 0 2px 8px rgba(5, 8, 20, .35);
}
.node::before {
    content: "";
    position: absolute;
    inset: 1px;
    border: 2px solid #1f2d5e;
    border-radius: 11px;
}
.selected {
    border-color: #4e72e8;
}
.selected::before {
    border-color: #4e72e8;
}
.node-icon {
    width: 16px;
    height: 16px;
}
.node-label {
    position: absolute;
    left: -20px;
    right: -20px;
    bottom: 100%;
    margin-bottom: 5px;
    font-size: 11px;
    line-height: 16px;
    font-weight: 400;
    text-align: center;
    color: #aab4c6;
    white-space: nowrap;
}
.node-transform { left: 676px; top: 168px; width: 162px; }
.node-python { left: 676px; top: 345px; width: 162px; }
.node-function { left: 676px; top: 523px; width: 218px; }
.node-approval { left: 562px; top: 877px; width: 144px; }
.node-delay { left: 792px; top: 877px; width: 144px; }
.node-post { left: 676px; top: 1054px; width: 156px; }
.node-print { left: 677px; top: 1231px; width: 144px; }
.node-if {
    left: 677px;
    top: 700px;
    width: 100px;
    height: 77px;
    border: 2px solid #1c2850;
    border-radius: 8px;
}
.pentagon {
    position: absolute;
    left: -2px;
    top: -2px;
    width: 100px;
    height: 77px;
}
.pentagon-edge {
    fill: #6b8cf5;
}
.pentagon-fill {
    fill: #651f9b;
}
.if-title {
    position: absolute;
    left: 27px;
    top: 33px;
    display: flex;
    align-items: center;
    gap: 6px;
    font-size: 10.5px;
    font-weight: 600;
    line-height: 14px;
    color: #f1f5f9;
}
.if-title svg {
    width: 10px;
    height: 10px;
}
.branch {
    position: absolute;
    top: 80px;
    font-size: 11px;
    line-height: 14px;
    font-weight: 500;
    color: #4e72e8;
    z-index: 3;
}
.branch-if { left: 17px; }
.branch-else { left: 60px; }
.http-tag {
    width: 16px;
    font-size: 5px;
    font-weight: 700;
    letter-spacing: .3px;
    color: #4e72e8;
}
.handle {
    position: absolute;
    width: 12px;
    height: 12px;
    border: 1.500px solid #9ca3af;
    border-radius: 50%;
    background: #3b6fd4;
    z-index: 3;
}
.h-top {
    left: 50%;
    top: -5px;
    margin-left: -6px;
    background: #0e8f6e;
}
.h-left {
    left: -4px;
    top: 50%;
    margin-top: -6px;
    background: #0e8f6e;
}
.h-right {
    right: -4px;
    top: 50%;
    margin-top: -6px;
}
.h-bottom {
    left: 50%;
    bottom: -5px;
    margin-left: -6px;
}
.node-if .h-top {
    top: -11px;
}
.h-if {
    left: 14px;
    top: 72px;
}
.h-else {
    left: 69px;
    top: 72px;
}

/* canvas controls */
.zoom-controls {
    position: absolute;
    left: 29px;
    top: 1197px;
    display: flex;
    flex-direction: column;
    width: 56px;
    height: 220px;
    overflow: hidden;
    border: 2px solid #1c2850;
    border-radius: 20px;
    background: #172042;
    box-shadow: 0 4px 14px rgba(5, 8, 20, .4);
}
.zoom-btn {
    display: flex;
    flex: 1;
    align-items: center;
    justify-content: center;
    background: transparent;
    border-bottom: 2px solid #253265;
    color: #f1f5f9;
}
.zoom-btn:last-child {
    border-bottom: none;
}
.zoom-btn svg {
    width: 40px;
    height: 40px;
}
.zoom-lock svg {
    width: 30px;
    height: 30px;
}
.minimap {
    position: absolute;
    left: 1065px;
    top: 1113px;
    box-sizing: content-box;
    width: 400px;
    height: 299px;
    border: 2px solid #334155;
    border-radius: 18px;
    background: #0f172a;
}
.minimap-mask {
    fill: #1e293b;
}
.minimap-nodes rect {
    fill: #475569;
}
.attribution {
    position: absolute;
    right: 0;
    bottom: 0;
    width: 116px;
    height: 32px;
    padding-left: 6px;
    background: #8b92a3;
    color: #a3a9b6;
    font-size: 20px;
    line-height: 32px;
    white-space: nowrap;
}

/* inspector */
.inspector {
    position: relative;
    display: flex;
    flex-direction: column;
    width: 900px;
    flex: none;
    background: #172042;
    border-left: 10px solid #232f5f;
    z-index: 1;
}
.inspector-toggle {
    position: absolute;
    left: -10px;
    top: 32px;
    display: flex;
    align-items: center;
    width: 30px;
    height: 56px;
    background: #172042;
    border: 4px solid #253265;
    border-left: none;
    border-radius: 0 28px 28px 0;
    color: #cbd5e1;
    z-index: 1;
}
.inspector-toggle svg {
    width: 24px;
    height: 24px;
    margin-left: -8px;
}
.inspector-head {
    position: relative;
    display: flex;
    align-items: center;
    justify-content: space-between;
    flex: none;
    height: 115px;
    padding: 0 36px 0 28px;
    background: #172042;
    border-bottom: 2px solid #1f2d5e;
    z-index: 1;
}
.inspector-head h2 {
    margin: 0;
    font-size: 32px;
    font-weight: 600;
    line-height: 40px;
}
.close-btn {
    display: flex;
    align-items: center;
    justify-content: center;
    width: 64px;
    height: 64px;
    border-radius: 14px;
    background: #2a3352;
    color: #e2e8f0;
}
.close-btn svg {
    width: 36px;
    height: 36px;
}
.inspector-body {
    position: relative;
    flex: 1;
    overflow: hidden;
}
.inspector-scroll {
    display: flex;
    flex-direction: column;
    align-items: flex-start;
    width: 796px;
    margin: -60px 0 0 32px;
}
.scroll-track {
    position: absolute;
    right: 0;
    top: 0;
    bottom: 0;
    width: 22px;
    background: #262f50;
}
.scroll-thumb {
    position: absolute;
    left: 7px;
    top: 505px;
    width: 10px;
    height: 745px;
    border-radius: 5px;
    background: #2c3a6e;
}
.data-card {
    display: flex;
    flex-direction: column;
    align-items: flex-start;
    flex: none;
    width: 795px;
    height: 509px;
    padding: 31px 31px 0;
    background: #0f172a;
    border: 2px solid #1f2d5e;
    border-radius: 20px;
}
.expr-chip {
    display: flex;
    align-items: center;
    height: 68px;
    padding: 0 16px;
    background: #172042;
    border: 2px solid #1f2d5e;
    border-radius: 8px;
}
.expr-chip code {
    display: block;
    height: 48px;
    padding: 0 14px;
    border: 2px solid #2a3560;
    border-radius: 8px;
    background: #262f50;
    color: #4e72e8;
    font-family: "DejaVu Sans Mono", monospace;
    font-size: 23.8px;
    font-style: italic;
    line-height: 44px;
    white-space: nowrap;
}
.expr-chip svg {
    width: 24px;
    height: 24px;
    margin-left: 8px;
    color: #475272;
}
.expr-chip.first {
    height: 67px;
}
.expr-chip.first svg {
    margin-top: -26px;
}
.expr-chip.second {
    margin-top: 13px;
}
.key-chip {
    display: flex;
    align-items: center;
    height: 56px;
    padding: 0 17px;
    background: #172042;
    border: 2px solid #1f2d5e;
    border-radius: 8px;
    color: #f1f5f9;
    font-family: "DejaVu Sans Mono", monospace;
    font-size: 25.6px;
    white-space: nowrap;
}
.data-card > .key-chip {
    margin-top: 10px;
}
.card-divider {
    width: 728px;
    height: 2px;
    margin-top: 17px;
    background: #1f2d5e;
}
.card-note {
    margin-top: 16px;
    padding-left: 2px;
    font-size: 24px;
    line-height: 32px;
    font-style: italic;
    color: #b4c0d4;
}
.chip-row {
    display: flex;
    align-items: center;
    gap: 13px;
    margin-top: 11px;
}
.doc-link {
    color: #4e72e8;
    font-style: italic;
    text-decoration: underline;
    white-space: nowrap;
}
.card-link {
    margin-top: 17px;
    padding-left: 1px;
    font-size: 23.8px;
    line-height: 34px;
}
.section-title {
    width: 100%;
    height: 54px;
    margin: 0;
    padding-bottom: 12px;
    border-bottom: 2px solid #1f2d5e;
    font-size: 32px;
    font-weight: 600;
    line-height: 40px;
    color: #f1f5f9;
}
.section-label { margin-top: 34px; }
.section-config { margin-top: 62px; }
.section-style { margin-top: 69px; }
.field-label {
    margin-top: 18px;
    font-size: 28px;
    font-weight: 500;
    line-height: 36px;
    white-space: nowrap;
}
.required {
    margin-left: 8px;
    color: #ef4444;
}
.text-input {
    display: block;
    width: 100%;
    height: 81px;
    margin-top: 30px;
    padding: 0 24px;
    background: #172042;
    border: 4px solid #22305f;
    border-radius: 20px;
    color: #f1f5f9;
    font-family: inherit;
    font-size: 28px;
    outline: none;
}
.code-input {
    display: block;
    width: 100%;
    height: 238px;
    margin-top: 30px;
    padding: 23px 36px;
    background: #172042;
    border: 4px solid #22305f;
    border-radius: 28px;
    color: #f1f5f9;
    color-scheme: dark;
    font-family: "DejaVu Sans Mono", monospace;
    font-size: 28px;
    line-height: 43px;
    outline: none;
    resize: vertical;
}
.help {
    margin: 11px 0 0;
    font-size: 28px;
    font-style: italic;
    line-height: 42px;
    color: #a4b0c8;
}
.code-input + .help {
    margin-top: 18px;
}
.guide-link {
    display: flex;
    align-items: center;
    gap: 14px;
    margin-top: 67px;
    font-size: 23.8px;
    line-height: 22px;
    text-decoration: none;
    border-bottom: 2px solid #4e72e8;
}
.guide-link svg {
    width: 24px;
    height: 24px;
}
.swatches {
    display: flex;
    gap: 16px;
    margin-top: 46px;
}
.swatch {
    width: 64px;
    height: 64px;
    border: 5px solid;
    border-radius: 14px;
    font-family: Inter, sans-serif;
    font-size: 25px;
    font-weight: 600;
}
.sw-white { background: #fff; border-color: #dfe6f8; color: #1e293b; }
.sw-sky { background: #f0f9ff; border-color: #cfdcf8; color: #0369a1; }
.sw-mint { background: #f0fdf4; border-color: #d4e6ee; color: #166534; }
.sw-amber { background: #fef3c7; border-color: #dedcc8; color: #92400e; }
.sw-pink { background: #fce7f3; border-color: #dfd4ee; color: #9d174d; }
.sw-indigo { background: #eef2ff; border-color: #cfdcf8; color: #3250d8; }
.sw-red { background: #fee2e2; border-color: #e0cfe0; color: #991b1b; }
.sw-slate { background: #1e293b; border-color: #2a3560; color: #f8fafc; }
.sw-navy { background: #0f172a; border-color: #1c2850; color: #38bdf8; }
```
